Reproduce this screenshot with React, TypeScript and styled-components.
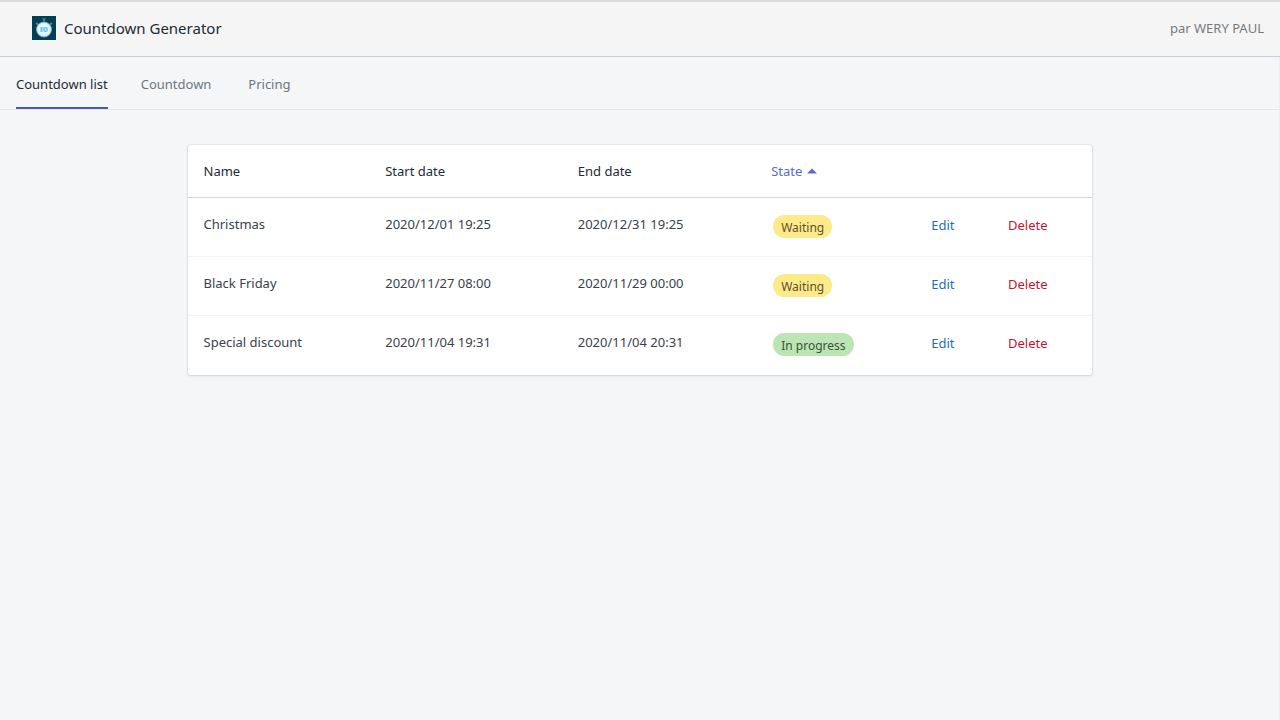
import React from "react";
import styled, { createGlobalStyle } from "styled-components";

const GlobalStyle = createGlobalStyle`
  *, *::before, *::after { box-sizing: border-box; }
  body {
    margin: 0;
    background: #f4f6f8;
    color: #212b36;
    font-family: "Segoe UI", "Noto Sans", "Open Sans", sans-serif;
    font-size: 13px;
    line-height: 20px;
  }
`;

const Page = styled.div`
  display: flex;
  flex-direction: column;
  min-height: 100vh;
`;

const Header = styled.header`
  display: flex;
  align-items: center;
  justify-content: space-between;
  height: 57px;
  padding: 0 16px 2px 32px;
  background: #f5f5f5;
  border-top: 2px solid #dcdcdc;
  border-bottom: 1px solid #cfcfd3;
`;

const Brand = styled.div`
  display: flex;
  align-items: center;
  gap: 8px;
`;

const AppName = styled.h1`
  margin: 0;
  font-size: 15px;
  line-height: 24px;
  font-weight: 400;
`;

const Author = styled.span`
  color: #777b7e;
`;

const Body = styled.div`
  flex: 1;
  border-right: 1px solid #eceef1;
`;

const Tabs = styled.nav`
  display: flex;
  gap: 33px;
  padding: 0 16px;
  border-bottom: 1px solid #e4e7eb;
`;

const Tab = styled.a<{ $active?: boolean }>`
  min-width: 50px;
  height: 52px;
  padding-top: 17px;
  text-align: center;
  text-decoration: none;
  color: ${(p) => (p.$active ? "#212b36" : "#6b7780")};
  border-bottom: 2px solid ${(p) => (p.$active ? "#4c58c0" : "transparent")};
`;

const Main = styled.main`
  max-width: 936px;
  margin: 0 auto;
  padding: 35px 16px;
`;

const Card = styled.section`
  background: #fff;
  border-radius: 3px;
  box-shadow: 0 0 0 1px rgba(63, 63, 68, 0.05), 0 1px 3px rgba(63, 63, 68, 0.15);
`;

const Table = styled.table`
  width: 100%;
  table-layout: fixed;
  border-collapse: separate;
  border-spacing: 0;
`;

const Col = styled.col<{ $width: string }>`
  width: ${(p) => p.$width};
`;

const HeadCell = styled.th`
  height: 53px;
  padding: 0 16px;
  border-bottom: 1px solid #d0d8e0;
  text-align: left;
  font-weight: 400;
`;

const SortButton = styled.button`
  display: flex;
  align-items: center;
  gap: 5px;
  padding: 0;
  border: 0;
  background: none;
  color: #5c6ac4;
  font: inherit;
  cursor: pointer;
`;

const Cell = styled.td`
  height: 59px;
  padding: 16px 16px 0;
  vertical-align: top;
  color: #38424c;
  tr:not(:last-child) > & {
    border-bottom: 1px solid #f2f4f6;
  }
`;

const Badge = styled.span<{ $tone: "waiting" | "progress" }>`
  display: block;
  width: fit-content;
  height: 23px;
  margin: 1px 2px 0;
  padding: 2px 8px 0;
  border-radius: 12px;
  font-size: 12px;
  line-height: 22px;
  white-space: nowrap;
  color: ${(p) => (p.$tone === "waiting" ? "#595130" : "#414f3e")};
  background: ${(p) => (p.$tone === "waiting" ? "#ffea8a" : "#bbe5b3")};
`;

const Action = styled.button<{ $danger?: boolean }>`
  display: block;
  padding: 1px 0 0;
  border: 0;
  background: none;
  font: inherit;
  cursor: pointer;
  color: ${(p) => (p.$danger ? "#c0152f" : "#1a6fc0")};
`;

const StopwatchLogo = () => (
  <svg width="24" height="24" viewBox="0 0 24 24" aria-hidden="true">
    <rect width="24" height="24" fill="#023f52" />
    <path d="M10 2.7h4" stroke="#3b6a7d" strokeWidth="1.2" />
    <path d="M12 3v2.600" stroke="#3f93c8" strokeWidth="1.600" />
    <path d="M4.2 7l1.8 1.6M19.8 7L18 8.600" stroke="#5b8997" strokeWidth="2" />
    <circle cx="12" cy="13.500" r="7.500" fill="#dcebf0" stroke="#86a9b4" strokeWidth="0.800" />
    <circle cx="12" cy="13.500" r="5.800" fill="#e6f6fd" />
    <path d="M9.500 11v5" stroke="#5fc6f2" strokeWidth="2" />
    <rect x="12" y="11.800" width="3" height="3.500" rx="1" fill="none" stroke="#5fc6f2" strokeWidth="1.600" />
  </svg>
);

const columns = ["20.1%", "21.3%", "21.4%", "17.7%", "8.5%", "11%"];

type Row = { name: string; start: string; end: string; tone: "waiting" | "progress" };

const rows: Row[] = [
  { name: "Christmas", start: "2020/12/01 19:25", end: "2020/12/31 19:25", tone: "waiting" },
  { name: "Black Friday", start: "2020/11/27 08:00", end: "2020/11/29 00:00", tone: "waiting" },
  { name: "Special discount", start: "2020/11/04 19:31", end: "2020/11/04 20:31", tone: "progress" },
];

export default function App() {
  return (
    <Page>
      <GlobalStyle />
      <Header>
        <Brand>
          <StopwatchLogo />
          <AppName>Countdown Generator</AppName>
        </Brand>
        <Author>par WERY PAUL</Author>
      </Header>
      <Body>
        <Tabs>
          <Tab href="#list" $active aria-current="page">Countdown list</Tab>
          <Tab href="#countdown">Countdown</Tab>
          <Tab href="#pricing">Pricing</Tab>
        </Tabs>
        <Main>
          <Card>
            <Table>
              <colgroup>
                {columns.map((w, i) => (
                  <Col key={i} $width={w} />
                ))}
              </colgroup>
              <thead>
                <tr>
                  <HeadCell scope="col">Name</HeadCell>
                  <HeadCell scope="col">Start date</HeadCell>
                  <HeadCell scope="col">End date</HeadCell>
                  <HeadCell scope="col" aria-sort="ascending">
                    <SortButton type="button">
                      State
                      <svg width="10" height="8" viewBox="0 0 10 8" aria-hidden="true">
                        <path d="M0 6.500L5 1.500l5 5z" fill="#5c6ac4" />
                      </svg>
                    </SortButton>
                  </HeadCell>
                  <HeadCell as="td" />
                  <HeadCell as="td" />
                </tr>
              </thead>
              <tbody>
                {rows.map((r) => (
                  <tr key={r.name}>
                    <Cell>{r.name}</Cell>
                    <Cell>{r.start}</Cell>
                    <Cell>{r.end}</Cell>
                    <Cell>
                      <Badge $tone={r.tone}>{r.tone === "waiting" ? "Waiting" : "In progress"}</Badge>
                    </Cell>
                    <Cell>
                      <Action type="button">Edit</Action>
                    </Cell>
                    <Cell>
                      <Action type="button" $danger>Delete</Action>
                    </Cell>
                  </tr>
                ))}
              </tbody>
            </Table>
          </Card>
        </Main>
      </Body>
    </Page>
  );
}
